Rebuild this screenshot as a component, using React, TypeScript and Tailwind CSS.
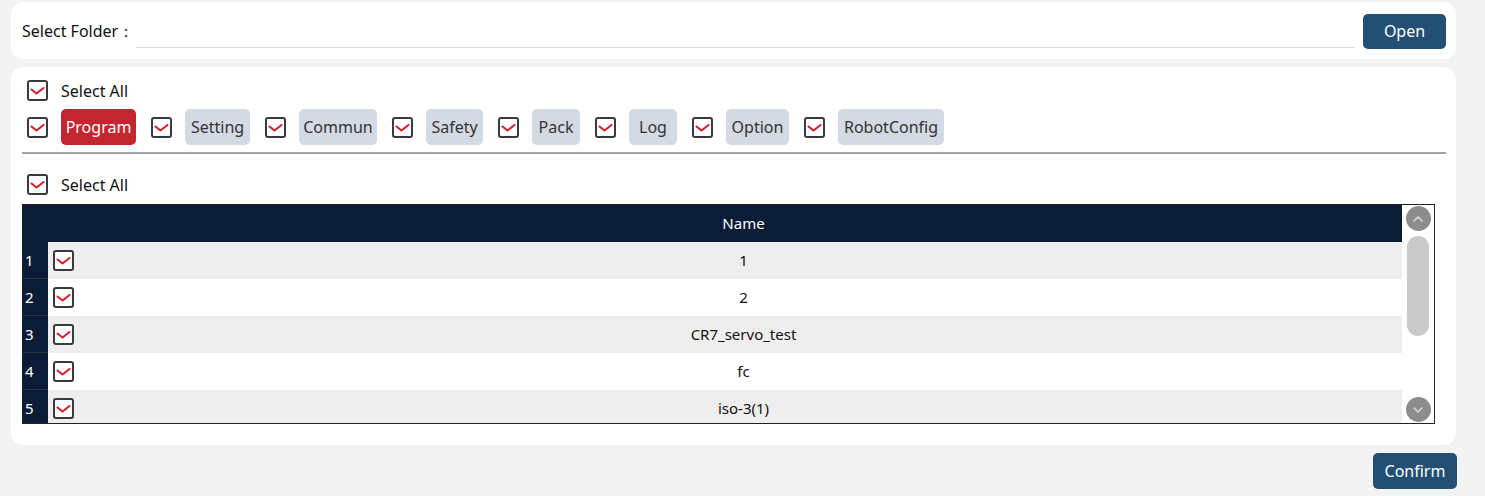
import React from "react";

const font = { fontFamily: '"Noto Sans", "Open Sans", sans-serif' };

function Check() {
  return (
    <div className="w-[21px] h-[21px] shrink-0 rounded-[3px] border-2 border-[#3a3a3a] bg-white flex items-center justify-center">
      <svg width="15" height="15" viewBox="0 0 15 15">
        <path d="M1.5 6.5 L6.5 10.5 L13.5 5" fill="none" stroke="#d02030" strokeWidth="2.1" strokeLinecap="round" strokeLinejoin="round" />
      </svg>
    </div>
  );
}

const tags = [
  { name: "Program", active: true, w: "w-[75px]" },
  { name: "Setting", w: "w-[65px]" },
  { name: "Commun", w: "w-[78px]" },
  { name: "Safety", w: "w-[57px]" },
  { name: "Pack", w: "w-[48px]" },
  { name: "Log", w: "w-[48px]" },
  { name: "Option", w: "w-[63px]" },
  { name: "RobotConfig", w: "w-[106px]" },
];

const rows = ["1", "2", "CR7_servo_test", "fc", "iso-3(1)"];

export default function App() {
  return (
    <div className="w-[1485px] h-[496px] bg-[#f3f3f3] pl-[11px] pr-[29px] pt-[2px] text-[15px] text-[#111]" style={font}>
      <div className="h-[57px] rounded-[12px] bg-white flex items-center pl-[11px] pr-[10px]">
        <span className="w-[114px] shrink-0 text-[16px]">Select Folder：</span>
        <div className="flex-1 h-[32px] border-b border-[#dcdcdc] mt-[2px] mr-[8px]" />
        <button className="w-[83px] h-[35px] rounded-[5px] bg-[#234f74] text-white text-[16px] mt-[1px]">Open</button>
      </div>

      <div className="mt-[8px] h-[378px] rounded-[12px] bg-white pl-[11px] pr-[10px] pt-[13px]">
        <div className="flex items-center h-[21px] pl-[5px] gap-[13px]">
          <Check />
          <span className="text-[16px]">Select All</span>
        </div>
        <div className="flex items-center h-[36px] mt-[8px] pl-[5px]">
          {tags.map((t) => (
            <div key={t.name} className="flex items-center mr-[15px]">
              <Check />
              <div
                className={`${t.w} ml-[13px] h-[36px] rounded-[5px] flex items-center justify-center text-[16px] ${
                  t.active ? "bg-[#c4262f] text-white" : "bg-[#d3dae4] text-[#333]"
                }`}
              >
                {t.name}
              </div>
            </div>
          ))}
        </div>
        <div className="mt-[7px] h-[2px] bg-[#a3a3a3]" />
        <div className="flex items-center h-[21px] pl-[5px] gap-[13px] mt-[20px]">
          <Check />
          <span className="text-[16px]">Select All</span>
        </div>
        <div className="mt-[9px] w-[1413px] h-[220px] border border-[#222] flex overflow-hidden">
          <div className="flex-1 flex flex-col">
            <div className="h-[37px] shrink-0 bg-[#0b1d36] text-white flex items-center">
              <div className="w-[62px]" />
              <div className="flex-1 text-center">Name</div>
            </div>
            {rows.map((r, i) => (
              <div key={r} className={`h-[37px] shrink-0 flex items-center ${i % 2 === 0 ? "bg-[#eeeeee]" : "bg-white"}`}>
                <div className="w-[25px] h-full bg-[#0b1d36] text-white flex items-center pl-[2px] border-b border-[#2a3340]">{i + 1}</div>
                <div className="w-[37px] flex items-center pl-[5px]">
                  <Check />
                </div>
                <div className="flex-1 text-center">{r}</div>
              </div>
            ))}
          </div>
          <div className="w-[32px] shrink-0 bg-white flex flex-col items-center pt-[1px]">
            <div className="w-[25px] h-[25px] rounded-full bg-[#8c8c8c] flex items-center justify-center">
              <svg width="14" height="14" viewBox="0 0 14 14">
                <path d="M3 9 L7 5 L11 9" fill="none" stroke="#c9c9c9" strokeWidth="1.8" strokeLinecap="round" strokeLinejoin="round" />
              </svg>
            </div>
            <div className="w-[22px] h-[100px] mt-[5px] rounded-full bg-[#c9c9c9]" />
            <div className="flex-1" />
            <div className="w-[25px] h-[25px] rounded-full bg-[#8c8c8c] flex items-center justify-center mb-[1px]">
              <svg width="14" height="14" viewBox="0 0 14 14">
                <path d="M3 5 L7 9 L11 5" fill="none" stroke="#c9c9c9" strokeWidth="1.8" strokeLinecap="round" strokeLinejoin="round" />
              </svg>
            </div>
          </div>
        </div>
      </div>

      <div className="flex justify-end mt-[8px] -mr-px">
        <button className="w-[84px] h-[36px] rounded-[5px] bg-[#234f74] text-white text-[16px]">Confirm</button>
      </div>
    </div>
  );
}
